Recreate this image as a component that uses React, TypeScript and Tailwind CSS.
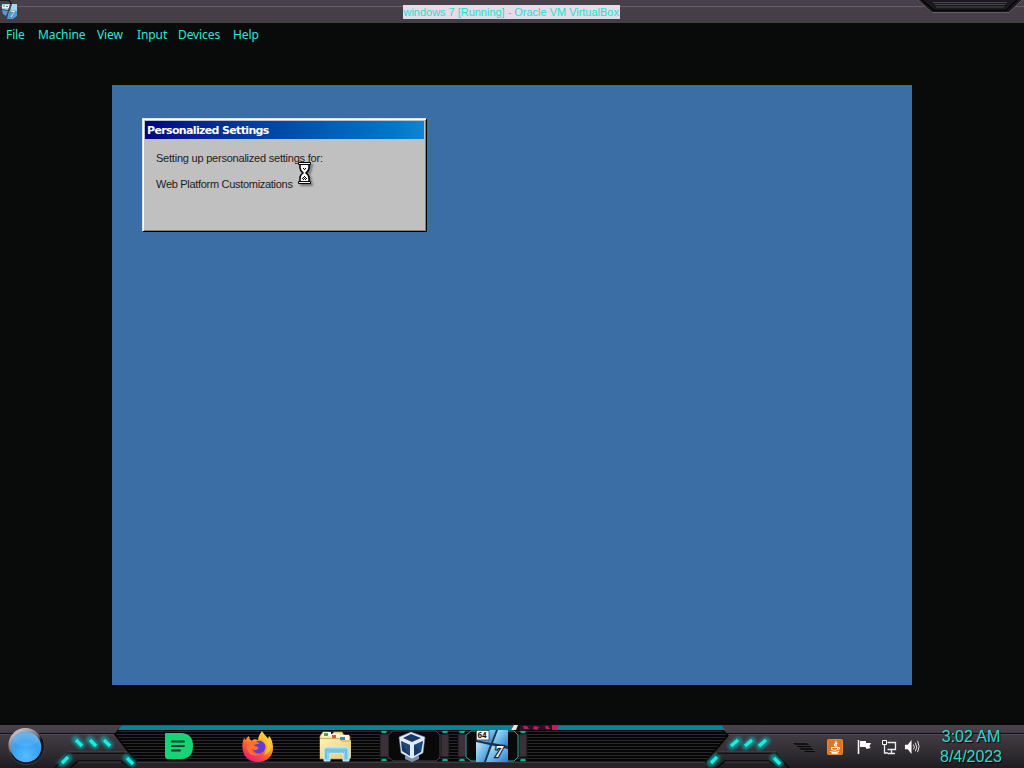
const menuItems = [
  { label: 'File', width: 'w-[32px]' },
  { label: 'Machine', width: 'w-[59px]' },
  { label: 'View', width: 'w-[40px]' },
  { label: 'Input', width: 'w-[41px]' },
  { label: 'Devices', width: 'w-[55px]' },
  { label: 'Help', width: 'w-[40px]' },
];

function SevenIcon({ className }: { className: string }) {
  return (
    <svg className={className} viewBox="0 0 32 32">
      <defs>
        <linearGradient id="pane" x1="0" y1="0" x2="1" y2="1">
          <stop offset="0" stopColor="#c5e7fa" />
          <stop offset="0.5" stopColor="#70b9e8" />
          <stop offset="1" stopColor="#2b7cc9" />
        </linearGradient>
      </defs>
      <rect width="32" height="32" fill="#173550" />
      <path d="M0 0h20l-5 13L0 10z" fill="url(#pane)" />
      <path d="M22 0h10v16l-15-3z" fill="url(#pane)" />
      <path d="M0 12l14 3L8 32H0z" fill="url(#pane)" />
      <path d="M16 15.500L32 19v13H10z" fill="url(#pane)" />
      <rect x="0.5" y="0.5" width="12.5" height="9.5" fill="#fff" stroke="#222" strokeWidth="0.7" />
      <text x="1.5" y="8.3" fontSize="8" fontWeight="bold" fontFamily="'Noto Sans', sans-serif" fill="#111">64</text>
      <text x="19" y="26.5" fontSize="16" fontWeight="bold" fontStyle="italic" fontFamily="'Liberation Serif', serif" fill="#fff" stroke="#15243c" strokeWidth="2.5" paintOrder="stroke">7</text>
    </svg>
  );
}

function TitleBar() {
  return (
    <header className="relative flex h-[23px] shrink-0 justify-center bg-gradient-to-b from-[#49414a] to-[#443d46]">
      <div className="absolute inset-x-0 top-[6px] h-px bg-[#655e68]" />
      <svg className="absolute left-0 top-0 h-4 w-4" viewBox="0 0 16 16">
        <path d="M0 0h8q3 1 3 4" fill="none" stroke="#111" strokeWidth="1.3" />
      </svg>
      <svg className="absolute left-[2px] top-[3px] h-[17px] w-[16px]" viewBox="0 0 16 17">
        <path d="M0 1h8L6 7l-6-1zM10 1h5v7H8z" fill="#a4d8ef" />
        <path d="M0 7l6 1-2 5-3-2zM7 8h8v5l-4 3H5z" fill="#4e9dd7" />
        <path d="M0 2h7v3H0z" fill="#eef3f5" />
        <path d="M1 3h2M4 3.500h2" stroke="#777" />
        <text x="8" y="14" fontSize="9" fontWeight="bold" fontStyle="italic" fontFamily="'Liberation Serif', serif" fill="#fff" stroke="#315b83" strokeWidth="0.7" paintOrder="stroke">7</text>
      </svg>
      <svg className="absolute right-0 top-0 h-[16px] w-[110px]" viewBox="914 0 110 16">
        <path d="M918 0h104l-13 12.5h-78z" fill="#1b191d" />
        <path d="M918 0l14 12.5h77L1022 0" fill="none" stroke="#716b73" strokeWidth="0.8" />
        <path d="M922 0l12 10.5h72L1017 0" fill="none" stroke="#050505" strokeWidth="1.5" />
        <path d="M933 2.5h74M935 4.5h70M936 7h68" stroke="#5f5961" strokeWidth="0.7" />
      </svg>
      <span className="relative -left-px mt-[5px] h-[14px] w-[217px] whitespace-nowrap bg-[#e5dce7] pl-px font-['Liberation_Sans',sans-serif] text-[11px] leading-[15px] tracking-[-0.02px] text-[#27dfd0]">
        windows 7 [Running] - Oracle VM VirtualBox
      </span>
    </header>
  );
}

function Hourglass() {
  return (
    <svg className="absolute left-[153px] top-[41px] h-[25px] w-[17px] drop-shadow-[2px_2px_1px_rgba(0,0,0,0.4)]" viewBox="0 0 17 25">
      <path d="M4 4h9v4q0 2-3 5 3 2 3 5v4H4v-4q0-3 3-5-3-3-3-5z" fill="#fff" stroke="#000" strokeWidth="1.5" />
      <path d="M2.500 2.500h12v2h-12zM2.500 21.500h12v2h-12z" fill="#fff" stroke="#000" />
      <path d="M7 8h1v1H7zM9 8h1v1H9zM8 9h1v1H8zM8 16h1v1H8zM7 17h1v1H7zM9 17h1v1H9zM6 18h1v1H6zM8 18h1v1H8zM10 18h1v1h-1zM7 19h1v1H7zM9 19h1v1H9z" fill="#000" />
    </svg>
  );
}

function SettingsDialog() {
  return (
    <section className="relative ml-[30px] mt-[33px] h-[114px] w-[285px] border border-b-black border-l-[#dce5ec] border-r-black border-t-[#dce5ec] bg-[#c0c0c0] shadow-[inset_1px_1px_0_#fff,inset_-1px_-1px_0_#808080]">
      <h1 className="mx-[2px] mt-[2px] h-[18px] bg-gradient-to-r from-[#00007f] to-[#1084d0] pl-[2px] font-['DejaVu_Sans',sans-serif] text-[11px] font-bold leading-[19px] tracking-[-0.65px] text-white">
        Personalized Settings
      </h1>
      <div className="ml-[13px] mt-[12px] whitespace-nowrap font-['Liberation_Sans',sans-serif] text-[11px] leading-[14px] text-[#202020]">
        <p className="tracking-[-0.22px]">Setting up personalized settings for:</p>
        <p className="mt-[12px] tracking-[-0.3px]">Web Platform Customizations</p>
      </div>
      <Hourglass />
    </section>
  );
}

function TaskbarArt() {
  return (
    <svg className="absolute inset-0 h-[43px] w-[1024px]" viewBox="0 0 1024 43">
      <defs>
        <linearGradient id="metal" x1="0" y1="0" x2="0" y2="1">
          <stop offset="0" stopColor="#4a434c" />
          <stop offset="0.25" stopColor="#403a42" />
          <stop offset="0.65" stopColor="#302d32" />
          <stop offset="1" stopColor="#1c1b1e" />
        </linearGradient>
        <pattern id="lines" width="4" height="3" patternUnits="userSpaceOnUse">
          <rect width="4" height="3" fill="#050506" />
          <rect width="4" height="1" fill="#29292b" />
        </pattern>
        <filter id="glow" x="-50%" y="-50%" width="200%" height="200%">
          <feGaussianBlur stdDeviation="1.7" />
        </filter>
      </defs>
      <rect width="1024" height="43" fill="url(#metal)" />
      <path d="M0 8.5h118M724 8.5h300" stroke="#100f11" />
      <path d="M0 9.5h114M728 9.5h296" stroke="#5a545c" strokeWidth="0.6" />
      <path d="M119 4.5l-4 5 22 28h568l23-27-6-6z" fill="url(#lines)" stroke="#050505" strokeWidth="1.5" />
      <path d="M122 .5h600l3 4.5H118z" fill="#04839b" />
      <path d="M514 0h12l-4 5h-11z" fill="#111" />
      <path d="M514 0h4l-2 5h-5z" fill="#f1dfe8" />
      <path d="M520 0h39l-3 5h-36z" fill="#2c112c" />
      <path d="M523 1h4l2 3h-5zM534 1l5 1-2 3-4-1zM545 1h3l2 3h-4zM552 0h7l-2 5h-5z" fill="#c51b5b" />
      <path d="M137 37.5h568" stroke="#3f3b40" />
      <path d="M137 38h568v5H137z" fill="#272428" />

      <g fill="none" stroke="#090909" strokeWidth="1.4">
        <path d="M55 43l13-15h59l10 10M70 43l8-7h43l10 7M711 38l8-10h57l13 15M717 43l8-7h44l10 7" />
      </g>
      <g fill="none" stroke="#625b63" strokeWidth="0.6">
        <path d="M68 27h59M719 27h57M78 37h43M725 37h44" />
      </g>

      <g stroke="#00b9b7" strokeWidth="8" strokeLinecap="round" opacity="0.65" filter="url(#glow)">
        <path d="M76 15l5 5M90 15l5 5M104 15l5 5M62 38l6-5M127 33l5 5M732 21l6-5M746 21l6-5M760 21l6-5M711 38l5-5M774 33l5 5" />
      </g>
      <g stroke="#19eee0" strokeWidth="3.4">
        <path d="M76 15l6 6M90 15l6 6M104 15l6 6M62 38l6-6M127 33l6 6M731 21l7-6M745 21l7-6M759 21l7-6M711 38l6-6M774 33l6 6" />
      </g>

      <g fill="#070707" stroke="#57515a" strokeWidth="0.3">
        <path d="M792 18h15l3 2h-15zM795 20.500h15l2 2h-14zM798 23h14l2 2h-13zM802 25.500h12l2 2h-10z" />
      </g>
    </svg>
  );
}

function StartOrb() {
  return (
    <svg className="h-[40px] w-[40px]" viewBox="0 0 40 40">
      <defs>
        <radialGradient id="orb" cx="50%" cy="80%" r="75%">
          <stop offset="0" stopColor="#55bcff" />
          <stop offset="0.65" stopColor="#36a0f2" />
          <stop offset="1" stopColor="#65aee9" />
        </radialGradient>
        <linearGradient id="rim" x1="0.3" y1="0" x2="0.8" y2="0.9">
          <stop offset="0" stopColor="#c9c9cc" />
          <stop offset="0.45" stopColor="#747279" />
          <stop offset="0.6" stopColor="#171518" />
        </linearGradient>
      </defs>
      <circle cx="20.5" cy="20.5" r="18" fill="#18161a" stroke="#504b53" strokeWidth="0.7" />
      <circle cx="19.5" cy="19" r="17" fill="url(#rim)" />
      <circle cx="20" cy="21" r="15.3" fill="url(#orb)" />
      <ellipse cx="20" cy="14" rx="12" ry="6.5" fill="#b7dcfa" opacity="0.15" />
    </svg>
  );
}

function NotesIcon() {
  return (
    <svg className="h-[28px] w-[30px]" viewBox="0 0 30 28">
      <path d="M2 1h15C25 1 29 6 29 14s-4 13-12 13H4q-3 0-3-3V2q0-1 1-1z" fill="#14d475" />
      <path d="M8 9.500h12M8 14h12M8 18.500h8" stroke="#073b29" strokeWidth="2" strokeLinecap="round" />
    </svg>
  );
}

function FirefoxIcon() {
  return (
    <svg className="h-[33px] w-[32px]" viewBox="0 0 32 33">
      <defs>
        <linearGradient id="fire" x1="0.85" y1="0" x2="0.25" y2="1">
          <stop offset="0" stopColor="#fff33f" />
          <stop offset="0.35" stopColor="#ffb12d" />
          <stop offset="0.65" stopColor="#ff592f" />
          <stop offset="1" stopColor="#e31587" />
        </linearGradient>
      </defs>
      <path d="M20 1c-2 3-4 6-4 9-3-1-5-1-6 1-2-1-3-3-3-5-2 1-3 3-3 4l-2-2C0 13 0 17 1 21c2 8 8 11 15 11 9 0 15-6 15-14 0-6-2-10-4-12l-1 3c-2-4-5-5-6-8z" fill="url(#fire)" />
      <circle cx="17" cy="17" r="6.5" fill="#653bd2" />
      <path d="M8 12c4-2 8-1 9 2-2 0-4 0-5 2 3 0 5 1 4 3-2 2-5 1-6-1-1 5 4 7 8 6-7 4-13-1-13-7 0-2 1-4 3-5z" fill="#ff7032" />
      <path d="M18 7c9 2 9 14 3 18 8-1 10-10 6-15-2-3-5-4-6-8z" fill="#ffcb38" opacity="0.8" />
    </svg>
  );
}

function ExplorerIcon() {
  return (
    <svg className="h-[33px] w-[34px]" viewBox="0 0 34 33">
      <defs>
        <linearGradient id="folder" x1="0" y1="0" x2="1" y2="1">
          <stop offset="0" stopColor="#fff4b4" />
          <stop offset="1" stopColor="#e4c777" />
        </linearGradient>
      </defs>
      <path d="M1 6l3-4h6l2 3 3-3h8l2 3 6 1v23H1z" fill="url(#folder)" stroke="#b88e36" strokeWidth="0.7" />
      <path d="M4 2h8v4H4zM12 4h8v4h-8zM20 5h10v5H20z" fill="#fff8d8" />
      <path d="M1 8h19l3 2h9v18H1z" fill="url(#folder)" />
      <path d="M5 3h4v3H5z" fill="#4ba25b" />
      <path d="M13 5h4v3h-4z" fill="#d55b34" />
      <path d="M21 7h5v3h-5z" fill="#3a83d0" />
      <path d="M1 8.500h19l3 2.500h9" fill="none" stroke="#c49b46" strokeWidth="0.8" />
      <path d="M5 31V20q0-3 3-3h19q3 0 3 3v11h-6v-8H11v8z" fill="#8ed4ef" stroke="#d0effa" />
      <path d="M7 29v-9h20v9M10 22h15" fill="none" stroke="#5ab3d2" strokeWidth="1.2" />
    </svg>
  );
}

function ButtonFrame({ active = false }: { active?: boolean }) {
  return (
    <svg className="absolute inset-0 h-[36px] w-[75px]" viewBox="0 0 75 36">
      <path d="M3 6h8v23H3zM64 6h8v23h-8z" fill="#3b3239" stroke="#171418" />
      <path d="M16 3h43l4 4v22l-4 4H16l-5-4V7z" fill="#09090a" stroke={active ? '#27a993' : '#454047'} />
      <path d="M4 3h6l-1 2H5zM65 3h6l-1 2h-4zM5 31h4l1 2H4zM66 31h4l1 2h-6z" fill="#17c6a2" stroke="#087561" strokeWidth="0.6" />
    </svg>
  );
}

function BoxIcon() {
  return (
    <svg className="relative h-[31px] w-[28px]" viewBox="0 0 28 31">
      <path d="M7 25l7-3 7 3v3l-7 3-7-3z" fill="#7992ad" />
      <path d="M1 6l12-5 14 5-2 16-11 6L3 22z" fill="#e2ebf3" stroke="#6583a3" strokeWidth="0.5" />
      <path d="M5 7l8-4 10 4-9 4zM3 10l9 4v11l-8-5zM16 14l9-4-2 11-7 4z" fill="#153a68" />
      <path d="M3 10l9 4v11zM25 10l-9 4 7 7z" fill="#245589" opacity="0.6" />
    </svg>
  );
}

function TrayIcons() {
  return (
    <>
      <svg className="ml-[297px] mt-[2px] h-[16px] w-[16px]" viewBox="0 0 17 17">
        <rect x="0.5" y="0.5" width="16" height="16" rx="1" fill="#dc7623" stroke="#f08a31" />
        <path d="M9 2c3 3-4 3 0 6M11 4c-2 2-2 3 0 4M5 9h6v2q-3 2-6 0zM11 9h2q1 2-2 2M3 13q5 2 10 0M5 15h7" fill="none" stroke="#fff" strokeWidth="1.1" />
      </svg>
      <svg className="ml-[13px] mt-[2px] h-[16px] w-[17px]" viewBox="0 0 17 16">
        <path d="M2.500 1v14" stroke="#f5f5f5" strokeWidth="1.6" />
        <path d="M4 2h6v2h5l-1.500 3 1 2-4 1-1-2H4z" fill="#fff" />
      </svg>
      <svg className="ml-[7px] mt-[2px] h-[17px] w-[17px]" viewBox="0 0 17 17">
        <path d="M7.500 3.500h8v7h-8M11.500 10v4M8 14.500h7M4.500 5v9h3.500" fill="none" stroke="#eee" strokeWidth="1.3" />
        <path d="M2.500 1.500h4v4h-4z" fill="#333" stroke="#fff" />
      </svg>
      <svg className="ml-[7px] mt-[2px] h-[16px] w-[16px]" viewBox="0 0 17 17">
        <path d="M1 6h3l4-5v15l-4-5H1z" fill="#fff" />
        <path d="M10 6q2 3 0 5M12 4q3 5 0 9M14.500 2q3 6 0 12" fill="none" stroke="#eee" strokeWidth="1" />
      </svg>
    </>
  );
}

function Taskbar() {
  return (
    <footer className="relative h-[43px] shrink-0">
      <TaskbarArt />
      <div className="relative flex h-[42px] items-center">
        <div className="ml-[6px]"><StartOrb /></div>
        <div className="ml-[118px]"><NotesIcon /></div>
        <div className="ml-[48px]"><FirefoxIcon /></div>
        <div className="ml-[45px]"><ExplorerIcon /></div>
        <div className="relative ml-[24px] flex h-[36px] w-[75px] items-center justify-center pr-[5px]">
          <ButtonFrame />
          <BoxIcon />
        </div>
        <div className="relative ml-[3px] flex h-[36px] w-[75px] items-center justify-center pr-[2px]">
          <ButtonFrame active />
          <SevenIcon className="relative h-[32px] w-[32px]" />
        </div>
        <TrayIcons />
        <div className="ml-[17px] mt-[2px] w-[68px] text-center font-['Liberation_Sans',sans-serif] text-[16px] leading-[20px] tracking-[-0.05px] text-[#29ddce] [text-shadow:1px_1px_1px_#000]">
          <div className="whitespace-nowrap">3:02 AM</div>
          <div>8/4/2023</div>
        </div>
      </div>
    </footer>
  );
}

export default function App() {
  return (
    <div className="flex h-[768px] w-[1024px] flex-col overflow-hidden bg-[#090a0a]">
      <TitleBar />
      <nav className="flex h-[23px] shrink-0 items-center pl-[6px] font-['Noto_Sans',sans-serif] text-[12px] tracking-[-0.1px] text-[#2ee8d8]">
        {menuItems.map((item) => (
          <span key={item.label} className={item.width}>{item.label}</span>
        ))}
      </nav>
      <main className="flex flex-1 justify-center pt-[39px]">
        <div className="h-[600px] w-[800px] bg-[#3b6ea5]">
          <div className="flex">
            <SettingsDialog />
          </div>
        </div>
      </main>
      <Taskbar />
    </div>
  );
}
